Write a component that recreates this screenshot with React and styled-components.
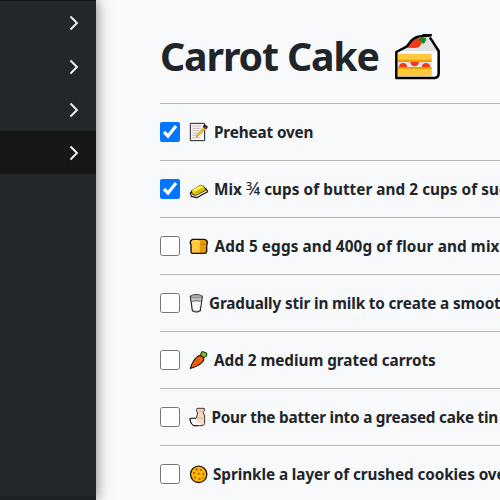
import React from "react";
import styled, { createGlobalStyle } from "styled-components";

const GlobalStyle = createGlobalStyle`
  * { box-sizing: border-box; }
  body { margin: 0; background: #f8f9fb; overflow: hidden; }
`;

const Page = styled.div`
  display: flex;
  width: 500px;
  height: 500px;
  overflow: hidden;
  background: #f8f9fb;
  color: #212529;
  font-family: "Noto Sans", "Open Sans", sans-serif;
`;

const Sidebar = styled.nav`
  display: flex;
  flex-direction: column;
  flex: 0 0 96px;
  height: 500px;
  background: #22272a;
  border-top: 1px solid #151719;
  box-shadow: 0 0 13px rgba(0, 0, 0, 0.52);
  z-index: 1;
`;

const NavItem = styled.button`
  display: flex;
  align-items: center;
  justify-content: flex-end;
  flex: 0 0 43.33px;
  padding: ${(p) => p.$nudge}px 17px 0 0;
  border: 0;
  background: ${(p) => (p.$active ? "#151618" : "transparent")};
`;

const SidebarFoot = styled.div`
  margin-top: auto;
  height: 4px;
  background: #1d2124;
`;

const Main = styled.main`
  flex: 1;
  min-width: 0;
  padding-left: 64px;
  overflow: hidden;
`;

const Header = styled.header`
  display: flex;
  align-items: center;
  height: 103px;
`;

const Title = styled.h1`
  margin: 9px 0 0;
  width: 234px;
  font-size: 39.3px;
  line-height: 56px;
  font-weight: 700;
  letter-spacing: -1.15px;
  white-space: nowrap;
`;

const CakeSvg = styled.svg`
  flex: none;
  width: 47px;
  height: 47px;
  margin-top: 10px;
`;

const Steps = styled.ul`
  margin: 0;
  padding: 0;
  list-style: none;
`;

const Step = styled.li`
  display: flex;
  align-items: center;
  height: 57px;
  border-top: 1px solid #b5b8bb;
`;

const Check = styled.input`
  flex: none;
  width: 20px;
  height: 20px;
  margin: 0 9px 0 0;
  accent-color: #0075ff;
`;

const StepSvg = styled.svg`
  flex: none;
  width: 20px;
  height: 22px;
`;

const Label = styled.span`
  margin-left: ${(p) => p.$gap}px;
  font-size: 15.3px;
  line-height: 24px;
  font-weight: 700;
  letter-spacing: ${(p) => p.$spacing}px;
  white-space: nowrap;
`;

const Fraction = styled.span`
  font-weight: 400;
  font-size: 18px;
  line-height: 1;
`;

const Chevron = () => (
  <svg width="10" height="16" viewBox="0 0 10 16" fill="none" stroke="#f4f4f4" strokeWidth="1.9">
    <path d="M1.5 1.5 8 8l-6.5 6.5" />
  </svg>
);

const Cake = () => (
  <CakeSvg viewBox="27 24 141 141">
    <path d="M33 82 59 68 76 48Q86 35 105 35L134 31 136 42 160 78V145Q160 158 148 158H33Z" fill="#fff" />
    <path d="M36 81 61 69 78 50 105 37 128 40 156 76V79H36Z" fill="#e3e3e3" />
    <path d="M39 86H140V106H39ZM39 130H140V154H39Z" fill="#ffc83d" />
    <path d="M39 104H140V111H39ZM39 126H140V132H39Z" fill="#eda000" />
    <path d="M39 111H140V126H39Z" fill="#e3e3e3" />
    <path d="M42 126Q43 114 54 114T67 126ZM76 111H102Q100 124 89 124T76 111ZM110 126Q112 114 123 114T136 126Z" fill="#f03a17" />
    <path d="M67 68Q75 47 91 41Q107 37 111 50Q108 67 90 69Z" fill="#f03a17" />
    <path d="m103 40 6-3 17 1-5 5 5 2-8 4 5 1-9 7-5-9-9-3Z" fill="#128a18" />
    <path d="M140 31Q124 30 113 33 93 34 80 46L66 64 34 81V159H149Q161 158 161 145V78L139 44 134 38" fill="none" stroke="#000" strokeWidth="7.5" strokeLinejoin="round" />
    <path d="M111 28H141L135 36H114Z" fill="#000" />
  </CakeSvg>
);

const Memo = () => (
  <>
    <path d="M106 25H149V77H106Z" fill="#f3f3f3" stroke="#222" strokeWidth="3" />
    <path d="M112 33H139M112 40H137M112 47H132M112 54H127M112 61H125M112 68H135" stroke="#aaa" strokeWidth="2" />
    <path d="m123 67 3-9 24-25 5 5-24 24Z" fill="#ffc32b" stroke="#9c741a" strokeWidth="1.5" />
    <path d="m144 32 6-3 8 5-1 6-5 3-8-7Z" fill="#201512" />
    <path d="m147 38 4-4 4 4-4 4Z" fill="#b83b24" />
  </>
);

const Butter = () => (
  <>
    <path d="M106 62 135 42 154 51 158 59 125 77 109 73Z" fill="#e5e5df" stroke="#171717" strokeWidth="3.5" strokeLinejoin="round" />
    <path d="M109 56 136 40 147 43 152 55 122 70 111 66Z" fill="#e3c90a" stroke="#222000" strokeWidth="2.5" />
    <path d="m110 55 26-15 11 4-27 15Z" fill="#fff04c" />
    <path d="m120 59 27-15 3 10-27 14Z" fill="#d8bc05" />
  </>
);

const Bread = () => (
  <>
    <path d="M112 31H148Q157 32 157 41Q157 45 155 48V68Q154 73 149 73H113Q108 73 108 67V48Q102 37 112 31Z" fill="#e79b00" stroke="#161006" strokeWidth="4" />
    <path d="M111 36Q120 32 132 34Q138 38 134 46V70H111V49Q107 43 111 36Z" fill="#ffc83d" />
    <path d="M112 37Q124 34 132 38" fill="none" stroke="#ffda79" strokeWidth="3" />
    <path d="M135 46H154" stroke="#bf7600" strokeWidth="2" />
  </>
);

const Milk = () => (
  <>
    <path d="M106 31Q124 20 142 31L136 74Q124 82 112 74Z" fill="#c9cbca" stroke="#292a2a" strokeWidth="3.5" />
    <path d="M111 45Q124 51 138 45L134 70Q124 76 114 70Z" fill="#f7f7f7" />
    <ellipse cx="124" cy="31" rx="16" ry="5" fill="#a9acac" stroke="#555" strokeWidth="1.5" />
    <path d="M111 46Q124 40 137 46" fill="none" stroke="#777" strokeWidth="3" />
  </>
);

const Carrot = () => (
  <>
    <path d="m136 37 4-11 7 1 8 3v9l-10 6Z" fill="#77b51b" stroke="#1d2a0b" strokeWidth="3" strokeLinejoin="round" />
    <path d="M106 76Q113 53 127 41Q135 34 143 42Q151 50 141 58Q129 70 106 76Z" fill="#f7630c" stroke="#24140c" strokeWidth="3.5" strokeLinejoin="round" />
    <path d="m121 52 5 4M117 62l5 3M134 48l-5 5M133 58l-4-3" stroke="#b83b11" strokeWidth="2" />
    <path d="m145 31 6 2v6h-6Z" fill="#8acd20" />
  </>
);

const Jar = () => (
  <>
    <path d="M126 25H148V32L144 38Q149 44 149 52V70Q148 76 141 77H117Q106 73 105 55H124L128 39 124 32Z" fill="#f7d7c4" stroke="#3c3533" strokeWidth="3" strokeLinejoin="round" />
    <path d="M107 54H125V68H140Q135 76 126 76H118Q108 72 107 54Z" fill="#fff" />
    <path d="M105 55Q106 73 117 77H129M107 55H123" fill="none" stroke="#141414" strokeWidth="3" />
    <path d="M128 33H144M128 54H145" stroke="#d3aa94" strokeWidth="2" />
  </>
);

const Cookie = () => (
  <>
    <circle cx="131" cy="52" r="24.5" fill="#ffb500" stroke="#241c12" strokeWidth="4" />
    <g fill="#8c4610">
      <circle cx="125" cy="37" r="2.8" /><circle cx="138" cy="39" r="2.8" />
      <circle cx="117" cy="48" r="2.8" /><circle cx="131" cy="50" r="2.8" />
      <circle cx="145" cy="51" r="2.8" /><circle cx="120" cy="61" r="2.8" />
      <circle cx="134" cy="66" r="2.8" /><circle cx="144" cy="61" r="2" />
    </g>
  </>
);

const steps = [
  { text: "Preheat oven", Icon: Memo, gap: 5, spacing: -0.14, done: true },
  { text: <>Mix <Fraction>¾</Fraction> cups of butter and 2 cups of sugar</>, Icon: Butter, gap: 5, spacing: 0.05, done: true },
  { text: "Add 5 eggs and 400g of flour and mix", Icon: Bread, gap: 5.5, spacing: 0.12 },
  { text: "Gradually stir in milk to create a smooth batter", Icon: Milk, gap: 0, spacing: -0.14 },
  { text: "Add 2 medium grated carrots", Icon: Carrot, gap: 5, spacing: -0.04 },
  { text: "Pour the batter into a greased cake tin", Icon: Jar, gap: 2.5, spacing: -0.22 },
  { text: "Sprinkle a layer of crushed cookies over the top", Icon: Cookie, gap: 4, spacing: -0.08 },
];

export default function App() {
  return (
    <Page>
      <GlobalStyle />
      <Sidebar>
        {[1, 2, 1, 1].map((nudge, i) => (
          <NavItem key={i} $nudge={nudge} $active={i === 3}><Chevron /></NavItem>
        ))}
        <SidebarFoot />
      </Sidebar>
      <Main>
        <Header>
          <Title>Carrot Cake</Title>
          <Cake />
        </Header>
        <Steps>
          {steps.map(({ text, Icon, gap, spacing, done }, i) => (
            <Step key={i}>
              <Check type="checkbox" defaultChecked={done} />
              <StepSvg viewBox="102 18 60 66"><Icon /></StepSvg>
              <Label $gap={gap} $spacing={spacing}>{text}</Label>
            </Step>
          ))}
        </Steps>
      </Main>
    </Page>
  );
}
